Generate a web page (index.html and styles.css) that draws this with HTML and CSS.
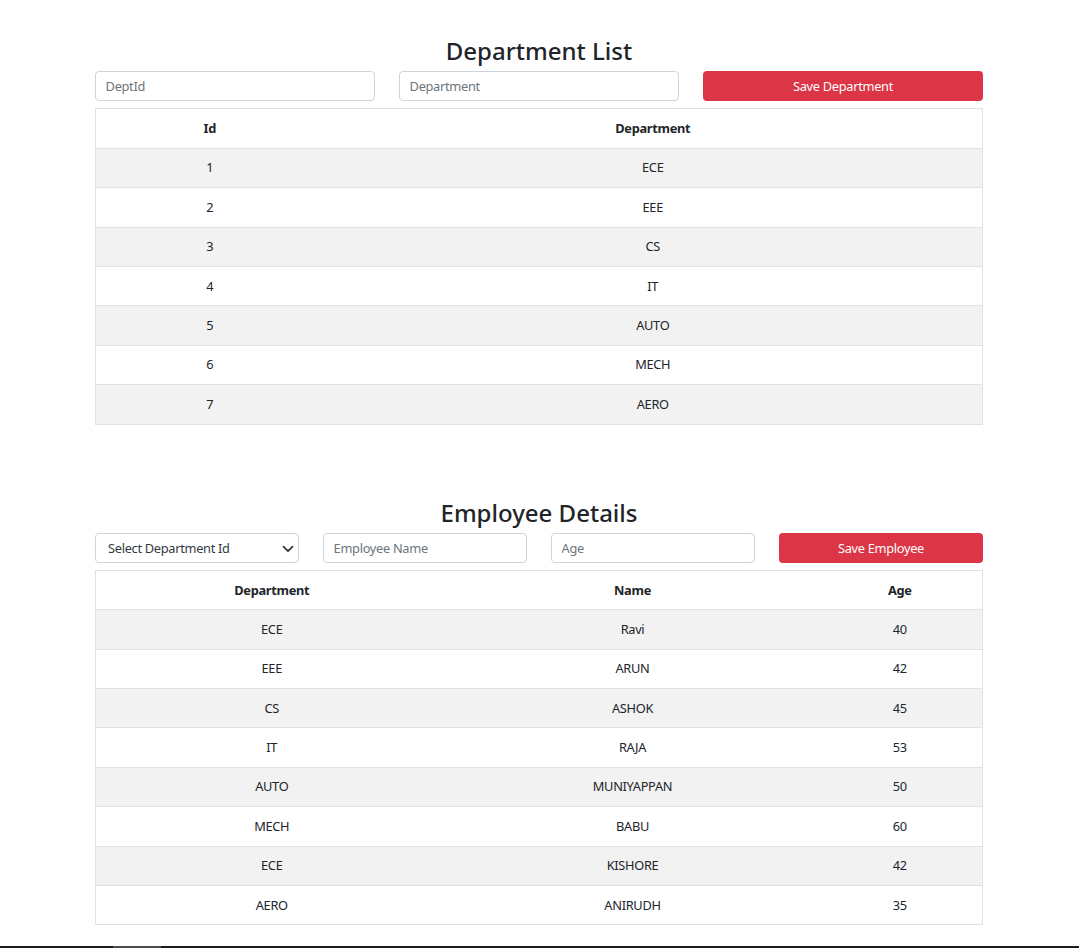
FILE: index.html
```html
<!DOCTYPE html>
<html lang="en">
<head>
<meta charset="utf-8">
<title>Departments</title>
<link rel="stylesheet" href="styles.css">
</head>
<body>
<div class="container">
  <section class="section">
    <h3 class="title">Department List</h3>
    <div class="form-row cols-3">
      <input class="field" type="text" placeholder="DeptId">
      <input class="field" type="text" placeholder="Department">
      <button class="btn-danger" type="button">Save Department</button>
    </div>
    <table class="table dept-table">
      <thead>
        <tr><th class="col-id">Id</th><th>Department</th></tr>
      </thead>
      <tbody>
        <tr><td>1</td><td>ECE</td></tr>
        <tr><td>2</td><td>EEE</td></tr>
        <tr><td>3</td><td>CS</td></tr>
        <tr><td>4</td><td>IT</td></tr>
        <tr><td>5</td><td>AUTO</td></tr>
        <tr><td>6</td><td>MECH</td></tr>
        <tr><td>7</td><td>AERO</td></tr>
      </tbody>
    </table>
  </section>

  <section class="section section-emp">
    <h3 class="title">Employee Details</h3>
    <div class="form-row cols-4">
      <div class="select-wrap">
        <select class="field select">
          <option>Select Department Id</option>
        </select>
        <svg class="chevron" width="12" height="9" viewBox="0 0 16 12" aria-hidden="true"><path d="M2 3.5l6 6 6-6" fill="none" stroke="#343a40" stroke-width="2.4" stroke-linecap="round" stroke-linejoin="round"/></svg>
      </div>
      <input class="field" type="text" placeholder="Employee Name">
      <input class="field" type="text" placeholder="Age">
      <button class="btn-danger" type="button">Save Employee</button>
    </div>
    <table class="table emp-table">
      <thead>
        <tr><th class="col-dept">Department</th><th class="col-name">Name</th><th>Age</th></tr>
      </thead>
      <tbody>
        <tr><td>ECE</td><td>Ravi</td><td>40</td></tr>
        <tr><td>EEE</td><td>ARUN</td><td>42</td></tr>
        <tr><td>CS</td><td>ASHOK</td><td>45</td></tr>
        <tr><td>IT</td><td>RAJA</td><td>53</td></tr>
        <tr><td>AUTO</td><td>MUNIYAPPAN</td><td>50</td></tr>
        <tr><td>MECH</td><td>BABU</td><td>60</td></tr>
        <tr><td>ECE</td><td>KISHORE</td><td>42</td></tr>
        <tr><td>AERO</td><td>ANIRUDH</td><td>35</td></tr>
      </tbody>
    </table>
  </section>
</div>
<div class="taskbar"><span class="taskbar-item"></span></div>
</body>
</html>
```

FILE: styles.css
```css
* { box-sizing: border-box; }

html, body {
  margin: 0;
  padding: 0;
  background: #fff;
}

body {
  font-family: "Noto Sans", "Open Sans", "DejaVu Sans", sans-serif;
  font-size: 12.8px;
  line-height: 1.5;
  letter-spacing: -0.3px;
  color: #212529;
}

.container {
  width: 888px;
  margin-left: calc(50% - 444.5px);
  padding-top: 37px;
}

.section-emp {
  margin-top: 74px;
}

.title {
  margin: 0 0 6.4px;
  font-size: 24px;
  font-weight: 500;
  line-height: 28px;
  letter-spacing: 0;
  text-align: center;
  color: #212529;
}

.form-row {
  display: grid;
  gap: 24px;
  margin-bottom: 7px;
}

.cols-3 { grid-template-columns: repeat(3, 1fr); }
.cols-4 { grid-template-columns: repeat(4, 1fr); }

.field {
  display: block;
  width: 100%;
  height: 30px;
  padding: 0 9.6px;
  font-family: inherit;
  font-size: 12.8px;
  letter-spacing: -0.3px;
  color: #212529;
  background: #fff;
  border: 1px solid #ced4da;
  border-radius: 4px;
  outline: none;
}

.field::placeholder {
  color: #6c757d;
  opacity: 1;
}

.select-wrap {
  position: relative;
}

.select {
  appearance: none;
  -webkit-appearance: none;
  padding-left: 12px;
  padding-right: 30px;
  color: #343a40;
}

.chevron {
  position: absolute;
  right: 5px;
  top: 11px;
  pointer-events: none;
}

.btn-danger {
  display: block;
  width: 100%;
  height: 30px;
  padding: 0 9.6px;
  font-family: inherit;
  font-size: 12.8px;
  letter-spacing: -0.3px;
  color: #fff;
  background: #dc3545;
  border: none;
  border-radius: 4px;
}

.table {
  width: 100%;
  border-collapse: collapse;
  border: 1px solid #dee2e6;
}

.table th,
.table td {
  padding: 9.6px 8px;
  line-height: 19.2px;
  text-align: center;
  border-bottom: 1px solid #dee2e6;
}

.table th {
  font-weight: 700;
}

.table tbody tr:nth-child(odd) td {
  background: #f2f2f2;
}

.col-id { width: 228px; }
.col-dept { width: 352px; }
.col-name { width: 370px; }

.taskbar {
  position: fixed;
  left: 0;
  right: 0;
  bottom: 0;
  height: 2px;
  background: #1c1c1c;
}

.taskbar-item {
  display: block;
  margin-left: 113px;
  width: 48px;
  height: 2px;
  background: #4d4d4d;
}
```
